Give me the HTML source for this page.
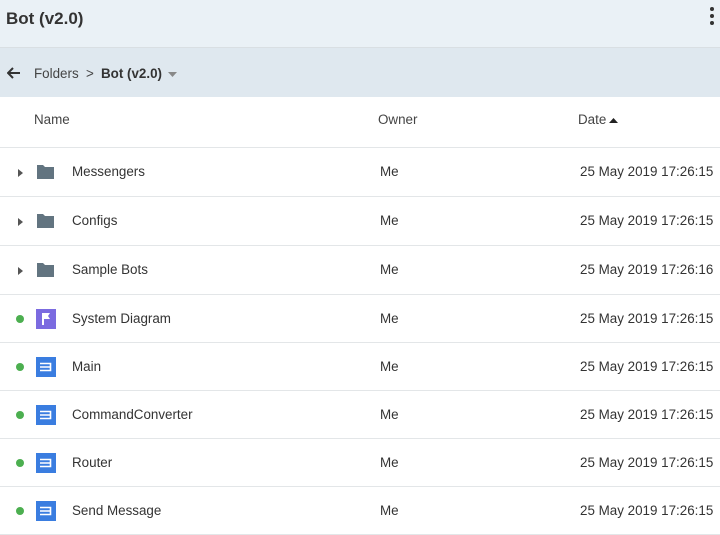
<!DOCTYPE html>
<html><head><style>
*{margin:0;padding:0;box-sizing:border-box}
body{width:720px;height:531px;overflow:hidden;background:#fff;font-family:"Liberation Sans",sans-serif;color:#333;font-size:13.4px}
.hdr{height:48px;background:#eaf1f6;border-bottom:1px solid #d9dfe3;position:relative}
.hdr h1{position:absolute;left:6px;top:9px;font-size:17px;font-weight:bold;color:#333}
.dots{position:absolute;right:6px;top:7px;width:4px}
.dots i{display:block;width:4px;height:4px;border-radius:50%;background:#333;margin-bottom:3px}
.bc{height:49px;background:#dfe8ef;position:relative;color:#444}
.bc span{position:absolute;top:18px}
.th{height:51px;border-bottom:1px solid #e3e6e8;position:relative;color:#444}
.th span{position:absolute;top:15px}
.row{height:48px;border-bottom:1px solid #e3e6e8;position:relative}
.row.t{height:49px}
.row span{position:absolute;top:16px}
.row .n{left:72px}.row .o{left:380px}.row .d{left:580px}
.tri{position:absolute;left:18px;top:21px;width:0;height:0;border-left:5px solid #555;border-top:4px solid transparent;border-bottom:4px solid transparent}
.dot{position:absolute;left:16px;top:20px;width:8px;height:8px;border-radius:50%;background:#4caf50}
.ic{position:absolute;left:36px;top:14px;width:20px;height:20px}
</style></head><body>
<div class="hdr"><h1>Bot (v2.0)</h1><div class="dots"><i></i><i></i><i></i></div></div>
<div class="bc">
<svg style="position:absolute;left:7px;top:19px" width="14" height="12" viewBox="0 0 14 12"><path d="M13 6H2M6 1L1 6l5 5" stroke="#333" stroke-width="2" fill="none"/></svg>
<span style="left:34px">Folders</span><span style="left:86px">&gt;</span><span style="left:101px;font-weight:bold;color:#333">Bot (v2.0)</span>
<svg style="position:absolute;left:168px;top:24px" width="10" height="6"><path d="M0 0h9L4.5 5z" fill="#888"/></svg>
</div>
<div class="th"><span style="left:34px">Name</span><span style="left:378px">Owner</span><span style="left:578px">Date</span>
<svg style="position:absolute;left:609px;top:21px" width="10" height="6"><path d="M0 5h9L4.5 0z" fill="#222"/></svg></div>

<div class="row t"><i class="tri"></i><svg class="ic" viewBox="0 0 20 20"><path d="M1 3h6l2 2h9v12H1z" fill="#627480"/></svg><span class="n">Messengers</span><span class="o">Me</span><span class="d">25 May 2019 17:26:15</span></div>
<div class="row t"><i class="tri"></i><svg class="ic" viewBox="0 0 20 20"><path d="M1 3h6l2 2h9v12H1z" fill="#627480"/></svg><span class="n">Configs</span><span class="o">Me</span><span class="d">25 May 2019 17:26:15</span></div>
<div class="row t"><i class="tri"></i><svg class="ic" viewBox="0 0 20 20"><path d="M1 3h6l2 2h9v12H1z" fill="#627480"/></svg><span class="n">Sample Bots</span><span class="o">Me</span><span class="d">25 May 2019 17:26:16</span></div>
<div class="row"><i class="dot"></i><svg class="ic" viewBox="0 0 20 20"><rect width="20" height="20" fill="#7b6be0"/><path d="M6 4h8l-2 3 2 3H8v6H6z" fill="#fff"/></svg><span class="n">System Diagram</span><span class="o">Me</span><span class="d">25 May 2019 17:26:15</span></div>
<div class="row"><i class="dot"></i><svg class="ic" viewBox="0 0 20 20"><rect width="20" height="20" fill="#3a7de0"/><path d="M4 6.5h10.5v7H4M4 10h10.5" stroke="#fff" stroke-width="1.6" fill="none"/></svg><span class="n">Main</span><span class="o">Me</span><span class="d">25 May 2019 17:26:15</span></div>
<div class="row"><i class="dot"></i><svg class="ic" viewBox="0 0 20 20"><rect width="20" height="20" fill="#3a7de0"/><path d="M4 6.5h10.5v7H4M4 10h10.5" stroke="#fff" stroke-width="1.6" fill="none"/></svg><span class="n">CommandConverter</span><span class="o">Me</span><span class="d">25 May 2019 17:26:15</span></div>
<div class="row"><i class="dot"></i><svg class="ic" viewBox="0 0 20 20"><rect width="20" height="20" fill="#3a7de0"/><path d="M4 6.5h10.5v7H4M4 10h10.5" stroke="#fff" stroke-width="1.6" fill="none"/></svg><span class="n">Router</span><span class="o">Me</span><span class="d">25 May 2019 17:26:15</span></div>
<div class="row"><i class="dot"></i><svg class="ic" viewBox="0 0 20 20"><rect width="20" height="20" fill="#3a7de0"/><path d="M4 6.5h10.5v7H4M4 10h10.5" stroke="#fff" stroke-width="1.6" fill="none"/></svg><span class="n">Send Message</span><span class="o">Me</span><span class="d">25 May 2019 17:26:15</span></div>
</body></html>
